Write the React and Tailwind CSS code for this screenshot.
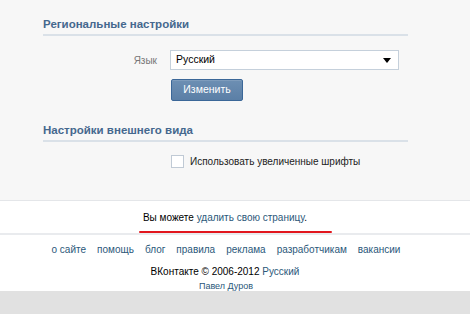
import { useState } from "react";

const links = ["о сайте", "помощь", "блог", "правила", "реклама", "разработчикам", "вакансии"];

const SectionTitle = ({ children }) => (
  <div className="w-[365px] border-b-2 border-[#dae1e8] pb-[3px] text-[11.5px] font-bold leading-[14px] text-[#45688e]">
    {children}
  </div>
);

const App = () => {
  const [bigFonts, setBigFonts] = useState(false);

  return (
    <div className="flex h-[314px] w-[470px] flex-col bg-[#e1e1e1] font-['Liberation_Sans',Arial,sans-serif] text-[10px] text-black">
      {/* settings */}
      <div className="h-[201px] border-b border-[#e4e6e9] bg-[#f7f7f7] pl-[43px] pt-[17px]">
        <SectionTitle>Региональные настройки</SectionTitle>

        <div className="mt-[14px] flex items-center">
          <span className="w-[127px] pr-[13px] text-right text-[#777]">Язык</span>
          <div className="flex h-[20px] w-[229px] items-center justify-between border border-[#c5d0db] bg-white pl-[5px] pr-[7px] text-[10.5px] text-black">
            <span>Русский</span>
            <span className="h-0 w-0 border-x-[4px] border-t-[5px] border-x-transparent border-t-black" />
          </div>
        </div>

        <button className="ml-[128px] mt-[9px] h-[22px] w-[72px] rounded-[2px] border border-[#3b6798] bg-gradient-to-b from-[#6d8fb3] to-[#5b7fa6] text-[10.5px] text-white shadow-[inset_0_1px_0_#7e9cbc]">
          Изменить
        </button>

        <div className="mt-[22px]">
          <SectionTitle>Настройки внешнего вида</SectionTitle>
        </div>

        <label className="ml-[128px] mt-[12px] flex cursor-pointer items-center">
          <span
            onClick={() => setBigFonts(!bigFonts)}
            className="h-[13px] w-[13px] border border-[#c0cad5] bg-white"
          />
          <span className="ml-[6px] text-[#222]">Использовать увеличенные шрифты</span>
        </label>
      </div>

      {/* delete page */}
      <div className="flex h-[34px] flex-col items-center border-b-2 border-[#e9ebee] bg-white pt-[9px]">
        <div className="pr-[20px]">
          Вы можете <a className="text-[#2b587a]">удалить свою страницу</a>.
        </div>
        <div className="mt-[6px] h-[4px] w-[193px] rounded-full bg-[#e2171e]" />
      </div>

      {/* footer */}
      <div className="flex h-[56px] flex-col items-center bg-white pr-[18px] pt-[7px]">
        <div className="flex gap-[11px] text-[#2b587a]">
          {links.map((l) => (
            <a key={l}>{l}</a>
          ))}
        </div>
        <div className="mt-[7px] pr-[2px]">
          ВКонтакте © 2006-2012 <a className="text-[#2b587a]">Русский</a>
        </div>
        <div className="mt-px text-[9px] text-[#2b587a]">Павел Дуров</div>
      </div>
    </div>
  );
};

export default App;
